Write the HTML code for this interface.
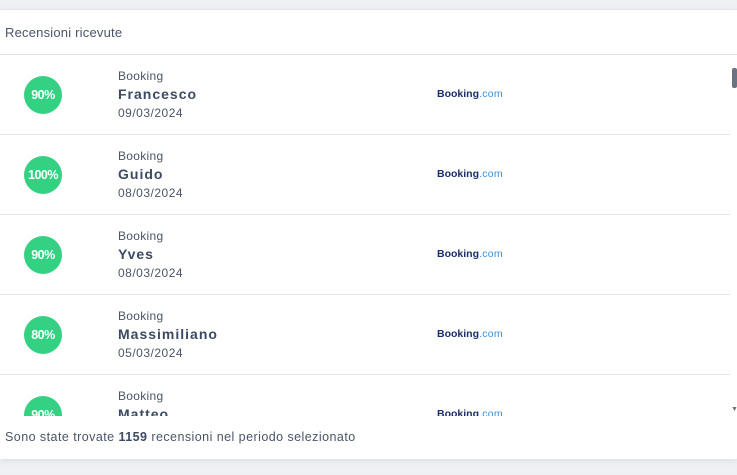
<!DOCTYPE html><html><head><style>
body{margin:0;width:737px;height:475px;background:#eef0f4;font-family:"Liberation Sans",sans-serif;position:relative;overflow:hidden}
.card{position:absolute;left:0;top:9px;width:737px;height:449px;background:#fff;border-top:1px solid #e4e6ea;box-shadow:0 2px 6px rgba(0,0,0,.08)}
.hd{position:absolute;left:5px;top:15px;font-size:13px;color:#4a5568;letter-spacing:.2px}
.hl{position:absolute;left:0;top:44px;width:737px;height:1px;background:#dfe1e5}
.list{position:absolute;left:0;top:45px;width:730px;height:361px;overflow:hidden}
.row{position:relative;height:79px;border-bottom:1px solid #e2e4e8}
.c{position:absolute;left:24px;top:21px;width:38px;height:38px;border-radius:50%;background:#34d183;color:#fff;font-weight:bold;font-size:12.5px;line-height:38px;text-align:center;letter-spacing:-.5px}
.s{position:absolute;left:118px;top:14px;font-size:12px;color:#4a5568;letter-spacing:.3px}
.n{position:absolute;left:118px;top:31px;font-size:14px;font-weight:bold;color:#3c4a62;letter-spacing:1px}
.d{position:absolute;left:118px;top:51px;font-size:12px;color:#4a5568;letter-spacing:.5px}
.l{position:absolute;left:437px;top:33px;font-size:10.5px;font-weight:bold;color:#1b2d6b;letter-spacing:0}
.l span{color:#3a8fdc;font-weight:normal;letter-spacing:.3px}
.ft{position:absolute;left:5px;top:420px;font-size:12.5px;color:#4a5568;letter-spacing:.45px}
.sb{position:absolute;left:732px;top:58px;width:5px;height:20px;background:#6b7280;border-radius:2px}
</style></head><body>
<div class="card">
<div class="hd">Recensioni ricevute</div><div class="hl"></div>
<div class="list">
<div class="row"><div class="c">90%</div><div class="s">Booking</div><div class="n">Francesco</div><div class="d">09/03/2024</div><div class="l">Booking<span>.com</span></div></div>
<div class="row"><div class="c">100%</div><div class="s">Booking</div><div class="n">Guido</div><div class="d">08/03/2024</div><div class="l">Booking<span>.com</span></div></div>
<div class="row"><div class="c">90%</div><div class="s">Booking</div><div class="n">Yves</div><div class="d">08/03/2024</div><div class="l">Booking<span>.com</span></div></div>
<div class="row"><div class="c">80%</div><div class="s">Booking</div><div class="n">Massimiliano</div><div class="d">05/03/2024</div><div class="l">Booking<span>.com</span></div></div>
<div class="row"><div class="c">90%</div><div class="s">Booking</div><div class="n">Matteo</div><div class="d">04/03/2024</div><div class="l">Booking<span>.com</span></div></div>
</div>
<div class="sb"></div>
<div style="position:absolute;left:731px;top:396px;font-size:7px;color:#6b7280">▼</div>
<div class="ft">Sono state trovate <b style="color:#3c4a62">1159</b> recensioni nel periodo selezionato</div>
</div>
</body></html>
